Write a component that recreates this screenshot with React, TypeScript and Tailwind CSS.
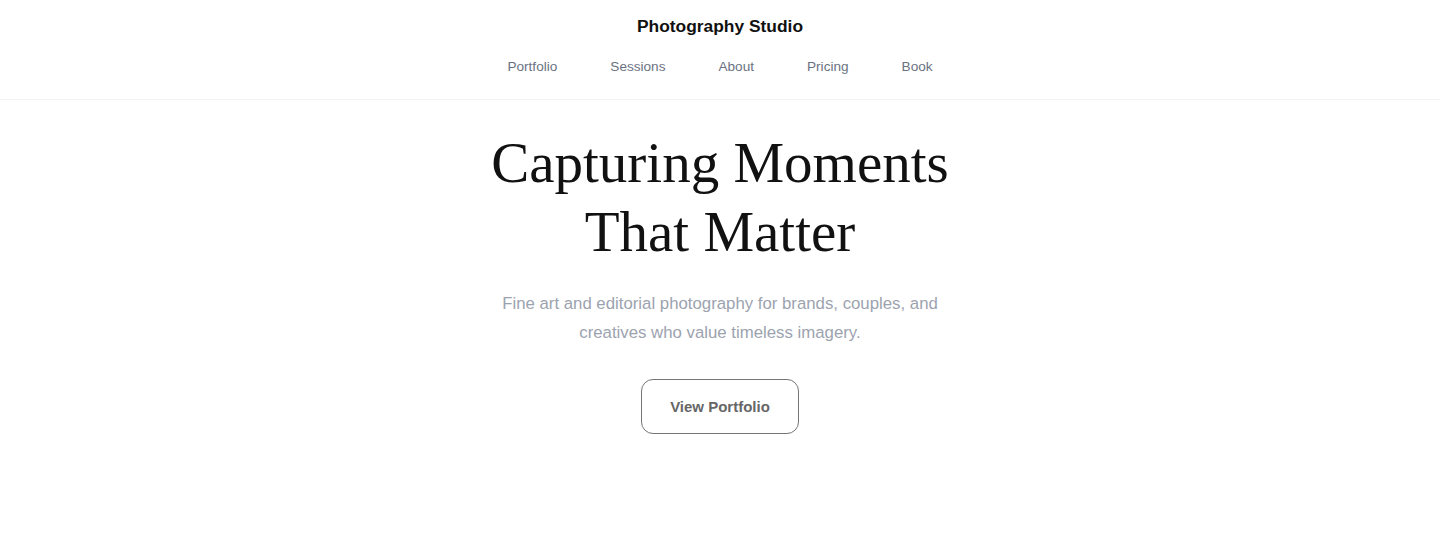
import React from 'react'

const links = ['Portfolio', 'Sessions', 'About', 'Pricing', 'Book']

const Header: React.FC = () => (
  <header className="flex flex-col items-center border-b border-gray-100 pt-3 pb-[22px]">
    <h1 className="text-[17.4px] leading-7 font-bold text-[#111]">Photography Studio</h1>
    <nav className="mt-[17px] flex items-center gap-[53px]">
      {links.map((l) => (
        <a key={l} href="#" className="text-[13.6px] leading-5 text-gray-500 hover:text-gray-900">
          {l}
        </a>
      ))}
    </nav>
  </header>
)

export default function App() {
  return (
    <div className="min-h-[560px] bg-white font-['Liberation_Sans',Arial,sans-serif]">
      <Header />
      <main className="flex flex-col items-center px-6 pt-7 text-center">
        <h2 className="font-['Liberation_Serif','Times_New_Roman',serif] text-[57px] leading-[69px] font-normal text-[#111]">
          Capturing Moments
          <br />
          That Matter
        </h2>
        <p className="mt-[23px] max-w-[460px] text-[16.8px] leading-[29px] text-[#9ca3af]">
          Fine art and editorial photography for brands, couples, and creatives who value timeless imagery.
        </p>
        <button className="mt-8 rounded-xl border border-[#757575] px-7 py-4 text-[15px] leading-[21px] font-bold text-[#666] hover:bg-gray-50">
          View Portfolio
        </button>
      </main>
    </div>
  )
}
